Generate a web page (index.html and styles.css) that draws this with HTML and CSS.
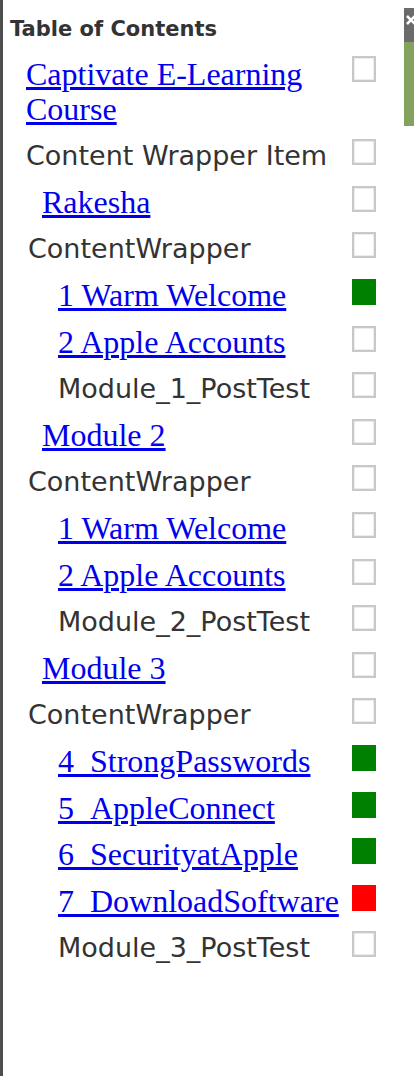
FILE: index.html
```html
<!DOCTYPE html>
<html lang="en">
<head>
    <meta charset="UTF-8">
    <meta name="viewport" content="width=device-width, initial-scale=1.0">
    <title>Table of Contents</title>
    <link rel="stylesheet" href="styles.css">
</head>
<body>
    <div class="toc">
        <div class="toc-title">Table of Contents</div>

        <div class="toc-row level-0">
            <a href="#" class="item-link multi">Captivate E-Learning Course</a>
            <span class="status"></span>
        </div>
        <div class="toc-row level-0">
            <span class="item-text">Content Wrapper Item</span>
            <span class="status"></span>
        </div>
        <div class="toc-row level-1">
            <a href="#" class="item-link">Rakesha</a>
            <span class="status"></span>
        </div>
        <div class="toc-row level-0 nudge">
            <span class="item-text">ContentWrapper</span>
            <span class="status"></span>
        </div>
        <div class="toc-row level-2">
            <a href="#" class="item-link">1 Warm Welcome</a>
            <span class="status done"></span>
        </div>
        <div class="toc-row level-2">
            <a href="#" class="item-link">2 Apple Accounts</a>
            <span class="status"></span>
        </div>
        <div class="toc-row level-2">
            <span class="item-text">Module_1_PostTest</span>
            <span class="status"></span>
        </div>
        <div class="toc-row level-1">
            <a href="#" class="item-link">Module 2</a>
            <span class="status"></span>
        </div>
        <div class="toc-row level-0 nudge">
            <span class="item-text">ContentWrapper</span>
            <span class="status"></span>
        </div>
        <div class="toc-row level-2">
            <a href="#" class="item-link">1 Warm Welcome</a>
            <span class="status"></span>
        </div>
        <div class="toc-row level-2">
            <a href="#" class="item-link">2 Apple Accounts</a>
            <span class="status"></span>
        </div>
        <div class="toc-row level-2">
            <span class="item-text">Module_2_PostTest</span>
            <span class="status"></span>
        </div>
        <div class="toc-row level-1">
            <a href="#" class="item-link">Module 3</a>
            <span class="status"></span>
        </div>
        <div class="toc-row level-0 nudge">
            <span class="item-text">ContentWrapper</span>
            <span class="status"></span>
        </div>
        <div class="toc-row level-2">
            <a href="#" class="item-link">4_StrongPasswords</a>
            <span class="status done"></span>
        </div>
        <div class="toc-row level-2">
            <a href="#" class="item-link">5_AppleConnect</a>
            <span class="status done"></span>
        </div>
        <div class="toc-row level-2">
            <a href="#" class="item-link">6_SecurityatApple</a>
            <span class="status done"></span>
        </div>
        <div class="toc-row level-2">
            <a href="#" class="item-link">7_DownloadSoftware</a>
            <span class="status failed"></span>
        </div>
        <div class="toc-row level-2">
            <span class="item-text">Module_3_PostTest</span>
            <span class="status"></span>
        </div>
    </div>

    <!-- panel sliding in from the right, mostly off screen -->
    <div class="side-panel">
        <div class="side-panel-bar">
            <svg width="12" height="12" viewBox="0 0 12 12">
                <path d="M2 2 L10 10 M10 2 L2 10" stroke="#fff" stroke-width="2.5" fill="none"/>
            </svg>
        </div>
        <div class="side-panel-body"></div>
    </div>
</body>
</html>
```

FILE: styles.css
```css
html, body {
    margin: 0;
    padding: 0;
    background: #fff;
}
body {
    overflow: hidden;
}
.toc {
    min-height: 100vh;
    box-sizing: border-box;
    border-left: 3px solid #4d4d4d;
    padding: 17px 38px 0 0;
}
.toc-title {
    font-family: "DejaVu Sans", Verdana, sans-serif;
    font-weight: bold;
    font-size: 21px;
    line-height: 25px;
    color: #333;
    padding-left: 7px;
    margin-bottom: 7.8px;
}
.toc-row {
    display: flex;
    align-items: flex-start;
    gap: 10px;
    padding: 5.8px 0;
    line-height: 35px;
}
.level-0 {
    padding-left: 23px;
}
.level-0.nudge {
    padding-left: 25px;
}
.level-1 {
    padding-left: 39px;
}
.level-2 {
    padding-left: 55px;
}
.item-link,
.item-text {
    flex: 1;
}
.item-link {
    font-family: "Liberation Serif", "Times New Roman", serif;
    font-size: 32px;
    line-height: 33px;
    padding-bottom: 2px;
    color: #0000ee;
    text-decoration: underline;
}
.item-link.multi {
    line-height: 35px;
    padding-top: 1px;
    padding-bottom: 1px;
}
.item-text {
    font-family: "DejaVu Sans", Verdana, sans-serif;
    font-size: 27px;
    line-height: 33px;
    padding-bottom: 2px;
    color: #333;
}
.status {
    flex: none;
    width: 24px;
    height: 26px;
    box-sizing: border-box;
    border: 2px solid #c8c8c8;
    background: #fff;
    box-shadow: inset 0 0 0 1px #ececec;
}
.status.done {
    background: #008000;
    border-color: #008000;
    box-shadow: none;
}
.status.failed {
    background: #ff0000;
    border-color: #ff0000;
    box-shadow: none;
}
.side-panel {
    position: absolute;
    top: 8px;
    left: 404px;
    width: 10px;
    overflow: hidden;
}
.side-panel-bar {
    height: 34px;
    background: #6b6b6b;
    padding: 6px 0 0 1px;
    box-sizing: border-box;
}
.side-panel-bar svg {
    display: block;
}
.side-panel-body {
    height: 84px;
    background: #82a25e;
}
```
